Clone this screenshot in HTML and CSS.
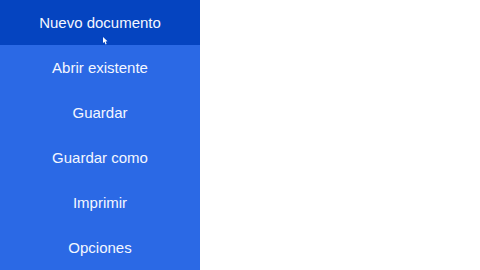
FILE: index.html
```html
<!DOCTYPE html>
<html lang="es">
<head>
    <meta charset="UTF-8">
    <meta name="viewport" content="width=device-width, initial-scale=1.0">
    <title>Menú</title>
    <link rel="stylesheet" href="styles.css">
</head>
<body>
    <nav class="menu">
        <a class="menu-item active" href="#">Nuevo documento
            <svg class="cursor" width="6" height="8" viewBox="0 0 6 8"><path d="M1 0 L1 6 L2.5 4.8 L3.6 7.5 L4.6 7 L3.6 4.4 L5.5 4.2 Z" fill="#fff"/></svg>
        </a>
        <a class="menu-item" href="#">Abrir existente</a>
        <a class="menu-item" href="#">Guardar</a>
        <a class="menu-item" href="#">Guardar como</a>
        <a class="menu-item" href="#">Imprimir</a>
        <a class="menu-item" href="#">Opciones</a>
    </nav>
</body>
</html>
```

FILE: styles.css
```css
body {
    margin: 0;
    padding: 0;
    background: #fff;
    font-family: "Liberation Sans", Arial, sans-serif;
}

.menu {
    width: 200px;
    background-color: #2b69e5;
    display: flex;
    flex-direction: column;
}
.menu-item {
    position: relative;
    height: 45px;
    display: flex;
    align-items: center;
    justify-content: center;
    color: #f4f7ff;
    font-size: 15px;
    text-decoration: none;
}
/*当前选中项*/
.menu-item.active {
    background-color: #0544c0;
}
.cursor {
    position: absolute;
    left: 102px;
    top: 37px;
}
```
